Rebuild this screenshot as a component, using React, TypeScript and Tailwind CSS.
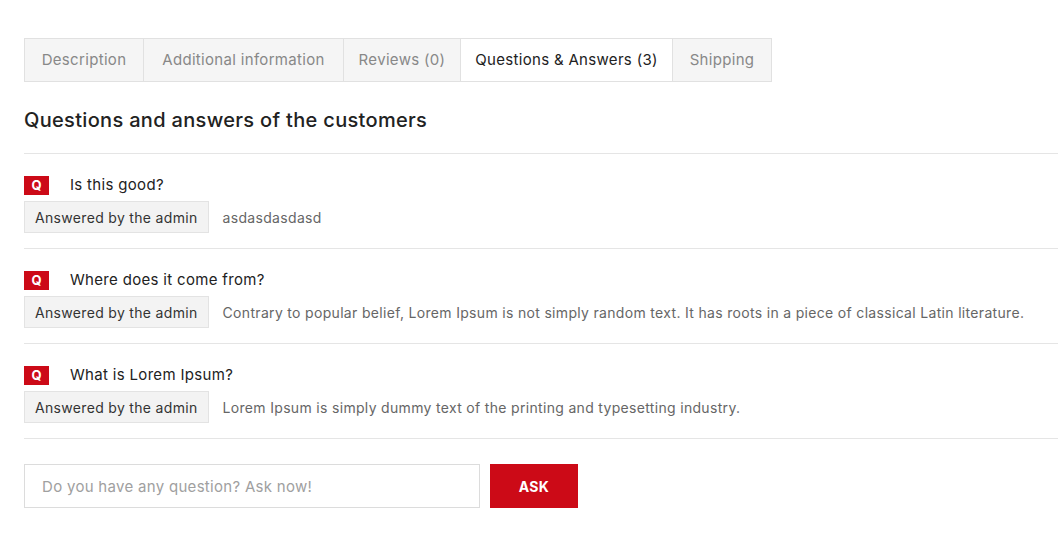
import React from "react";

const tabs = [
  { label: "Description", w: "w-[120px]" },
  { label: "Additional information", w: "w-[200px]" },
  { label: "Reviews (0)", w: "w-[117px]" },
  { label: "Questions & Answers (3)", w: "w-[212px]", active: true },
  { label: "Shipping", w: "w-[99px]" },
];

const questions = [
  { q: "Is this good?", a: "asdasdasdasd" },
  {
    q: "Where does it come from?",
    a: "Contrary to popular belief, Lorem Ipsum is not simply random text. It has roots in a piece of classical Latin literature.",
  },
  { q: "What is Lorem Ipsum?", a: "Lorem Ipsum is simply dummy text of the printing and typesetting industry." },
];

const QuestionItem = ({ q, a }: { q: string; a: string }) => (
  <div className="border-b border-[#e5e5e5] pt-[22px] pb-[15px]">
    <div className="flex items-center h-[19px]">
      <span className="w-[25px] h-[19px] bg-[#cc0a17] text-white text-[13px] font-bold flex items-center justify-center tracking-normal">
        Q
      </span>
      <span className="ml-[21px] text-[15px] text-[#222]">{q}</span>
    </div>
    <div className="flex items-center mt-[6px]">
      <span className="h-[32px] px-[10px] flex items-center bg-[#f3f3f3] border border-[#e3e3e3] text-[14px] text-[#333]">
        Answered by the admin
      </span>
      <span className="ml-[14px] text-[14px] text-[#666]">{a}</span>
    </div>
  </div>
);

export default function App() {
  return (
    <div
      className="bg-white min-h-[547px] pl-6 pt-[38px] overflow-hidden tracking-[0.02em]"
      style={{ fontFamily: "Inter, 'Open Sans', sans-serif" }}
    >
      <div className="flex">
        {tabs.map((t, i) => (
          <div
            key={t.label}
            className={`${t.w} h-[44px] flex items-center justify-center text-[15px] border-y border-r border-[#e1e1e1] ${
              i === 0 ? "border-l" : ""
            } ${t.active ? "bg-white text-[#222]" : "bg-[#f5f5f5] text-[#888]"}`}
          >
            {t.label}
          </div>
        ))}
      </div>

      <h2 className="text-[20px] text-[#222] mt-[24px] leading-[28px] font-medium">
        Questions and answers of the customers
      </h2>

      <div className="mt-[19px] border-t border-[#e5e5e5]">
        {questions.map((item) => (
          <QuestionItem key={item.q} {...item} />
        ))}
      </div>

      <div className="flex mt-[25px]">
        <input
          className="w-[456px] h-[44px] border border-[#dcdcdc] px-[17px] text-[15px] tracking-[0.02em] outline-none placeholder:text-[#a0a0a0]"
          placeholder="Do you have any question? Ask now!"
        />
        <button className="ml-[10px] w-[88px] h-[44px] bg-[#cc0a17] text-white text-[14px] font-bold">ASK</button>
      </div>
    </div>
  );
}
